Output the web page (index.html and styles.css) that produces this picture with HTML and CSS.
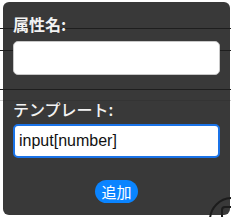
FILE: index.html
```html
<!DOCTYPE html>
<html lang="ja">
<head>
    <meta charset="UTF-8">
    <meta name="viewport" content="width=device-width, initial-scale=1.0">
    <title>属性の追加</title>
    <link rel="stylesheet" href="styles.css">
</head>
<body>
    <div class="list">
        <div class="row row-a"></div>
        <div class="row row-b"></div>
        <div class="row row-c"></div>
        <div class="row row-d"></div>
    </div>

    <div class="dialog">
        <label class="field-label first">属性名:</label>
        <input class="field" type="text" value="">
        <label class="field-label second">テンプレート:</label>
        <input class="field focused" type="text" value="input[number]">
        <div class="actions">
            <button class="add">追加</button>
        </div>
    </div>

    <svg class="corner-btn" width="30" height="30" viewBox="0 0 30 30">
        <circle cx="31" cy="33" r="22" fill="none" stroke="#1c1c1c" stroke-width="2"/>
        <rect x="21" y="20" width="12" height="12" rx="3" fill="none" stroke="#1c1c1c" stroke-width="2"/>
    </svg>
</body>
</html>
```

FILE: styles.css
```css
body {
    margin: 0;
    background-color: #ffffff;
    font-family: "Liberation Sans", "Noto Sans CJK JP", sans-serif;
    width: 231px;
    height: 217px;
    overflow: hidden;
    position: relative;
}

.row {
    border-bottom: 1px solid #222;
}

.row-a { height: 28px; }
.row-b { height: 21px; }
.row-c { height: 38px; }
.row-d {
    height: 10px;
    border-bottom-color: #d0d0d0;
}

.dialog {
    position: absolute;
    left: 3px;
    top: 2px;
    width: 227px;
    height: 213px;
    box-sizing: border-box;
    padding: 13px 10px 0 10px;
    background-color: rgba(30, 30, 30, 0.88);
    border-radius: 6px;
    display: flex;
    flex-direction: column;
}

.field-label {
    color: #f2f2f2;
    font-size: 16px;
    line-height: 18px;
    font-family: "Noto Sans CJK JP", sans-serif;
}

.field-label.first {
    font-weight: bold;
    margin-bottom: 8px;
}

.field-label.second {
    font-weight: 500;
    margin-top: 25px;
    margin-bottom: 6px;
}

.field {
    height: 34px;
    box-sizing: border-box;
    border: 1px solid #c8c8c8;
    border-radius: 5px;
    background: #fff;
    padding: 0 5px;
    font-family: "Liberation Sans", sans-serif;
    font-size: 16px;
    color: #111;
    outline: none;
}

.field.focused {
    border: 2px solid #1a73e8;
    padding: 0 4px;
}

.actions {
    display: flex;
    justify-content: center;
    margin-top: 22px;
}

.add {
    background-color: #0a84ff;
    color: #ffffff;
    border: none;
    border-radius: 12px;
    height: 23px;
    padding: 0 6px;
    font-size: 15px;
    font-family: "Noto Sans CJK JP", sans-serif;
    line-height: 23px;
    cursor: pointer;
}

.corner-btn {
    position: absolute;
    right: 0;
    bottom: 0;
}
```
